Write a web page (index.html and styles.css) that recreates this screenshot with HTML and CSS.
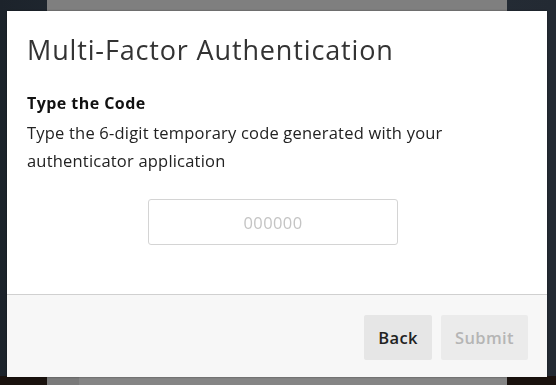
FILE: index.html
```html
<!DOCTYPE html>
<html lang="en">

<head>
    <meta charset="UTF-8">
    <meta name="viewport" content="width=device-width, initial-scale=1.0">
    <title>Multi-Factor Authentication</title>
    <link rel="stylesheet" href="styles.css">
</head>

<body>
    <!-- page behind the dialog -->
    <div class="backdrop">
        <div class="page-top"></div>
        <div class="page-bottom">
            <div class="pb-left"></div>
            <div class="pb-mid"></div>
            <div class="pb-right"></div>
        </div>
    </div>

    <div class="modal-overlay">
        <div class="modal">
            <div class="modal-header">
                <h1>Multi-Factor Authentication</h1>
            </div>
            <div class="modal-body">
                <h2>Type the Code</h2>
                <p>Type the 6-digit temporary code generated with your authenticator application</p>
                <div class="code-wrap">
                    <input type="text" class="code-input" placeholder="000000" maxlength="6">
                </div>
            </div>
            <div class="modal-footer">
                <button class="btn btn-back">Back</button>
                <button class="btn btn-submit" disabled>Submit</button>
            </div>
        </div>
    </div>
</body>

</html>
```

FILE: styles.css
```css
body {
    margin: 0;
    padding: 0;
    height: 100vh;
    overflow: hidden;
    background: linear-gradient(to right, #1c232b, #27303a 40%, #232a33);
    font-family: "Open Sans", "Liberation Sans", sans-serif;
    color: #333;
}

.backdrop {
    height: 100%;
    display: flex;
    flex-direction: column;
    justify-content: space-between;
    margin: 0 49px 0 47px;
}

.page-top {
    height: 12px;
    background: #7f7f7f;
}

.page-bottom {
    height: 9px;
    display: flex;
    background: #1a120e;
    margin-left: -47px;
    margin-right: -49px;
}

.pb-left {
    width: 47px;
}

.pb-mid {
    width: 428px;
    background: #858585;
    border-left: 32px solid #7a7a7a;
}

.pb-right {
    flex: 1;
}

.modal-overlay {
    position: fixed;
    top: 0;
    left: 0;
    width: 100%;
    height: 100%;
    box-sizing: border-box;
    padding: 11px 9px 8px 7px;
    display: flex;
}

.modal {
    flex: 1;
    background: #fff;
    display: flex;
    flex-direction: column;
    box-shadow: 0 0 2px rgba(0, 0, 0, 0.4);
}

.modal-header {
    padding: 20px 20px 0;
}

.modal-header h1 {
    margin: 0;
    font-size: 27px;
    font-weight: 400;
    letter-spacing: 0.85px;
    line-height: 38px;
    color: #333;
}

.modal-body {
    flex: 1;
    padding: 20px 20px 0;
}

.modal-body h2 {
    margin: 0;
    font-size: 16px;
    font-weight: 700;
    letter-spacing: 0.45px;
    line-height: 28px;
    color: #111;
}

.modal-body p {
    margin: 2px 0 0;
    font-size: 16.5px;
    letter-spacing: 0.2px;
    line-height: 28px;
    color: #222;
}

.code-wrap {
    display: flex;
    justify-content: center;
    margin-top: 24px;
    padding-right: 8px;
}

.code-input {
    width: 250px;
    height: 46px;
    box-sizing: border-box;
    border: 1px solid #d4d4d4;
    border-radius: 3px;
    font-family: "Open Sans", "Liberation Sans", sans-serif;
    font-size: 16.5px;
    letter-spacing: 0.4px;
    text-align: center;
    color: #333;
    outline: none;
}

.code-input::placeholder {
    color: #c4c4c4;
}

.modal-footer {
    height: 83px;
    box-sizing: border-box;
    background: #f7f7f7;
    border-top: 1px solid #d0d0d0;
    display: flex;
    justify-content: flex-end;
    align-items: center;
    gap: 9px;
    padding: 2px 19px 0;
}

.btn {
    height: 45px;
    border: none;
    border-radius: 2px;
    font-family: "Open Sans", "Liberation Sans", sans-serif;
    font-size: 16.5px;
    font-weight: 600;
    letter-spacing: 0.4px;
    padding: 0;
    cursor: pointer;
}

.btn-back {
    width: 68px;
    background: #e6e6e6;
    color: #222;
}

.btn-submit {
    width: 87px;
    background: #ebebeb;
    color: #b5b5b5;
    cursor: default;
}
```
